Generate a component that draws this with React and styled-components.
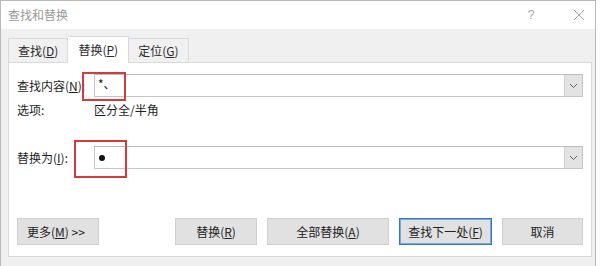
import React from "react";
import styled, { createGlobalStyle, css } from "styled-components";

const Global = createGlobalStyle`
  html, body { margin: 0; padding: 0; background: #ffffff; }
  body { font-family: "Noto Sans CJK SC", "Noto Sans", sans-serif; }
`;

const Window = styled.div`
  width: 596px;
  height: 266px;
  box-sizing: border-box;
  border: 1px solid #b9b9b9;
  border-bottom: none;
  background: #f0f0f0;
  display: flex;
  flex-direction: column;
  font-family: "Noto Sans CJK SC", "Noto Sans", sans-serif;
  font-size: 12px;
  color: #1e1e1e;
`;

const TitleBar = styled.div`
  height: 28px;
  background: #ffffff;
  display: flex;
  align-items: center;
  padding-left: 7px;
  padding-right: 10px;
  gap: 36px;
`;

const Title = styled.div`
  color: #9a9a9a;
  font-size: 12px;
  line-height: 14px;
  flex: 1;
`;

const TitleButton = styled.div`
  width: 12px;
  display: flex;
  align-items: center;
  justify-content: center;
  color: #a5a5a5;
  font-family: "Liberation Sans", sans-serif;
  font-size: 12px;
  line-height: 14px;
`;

const Body = styled.div`
  flex: 1;
  padding: 0 3px 0 7px;
  display: flex;
  flex-direction: column;
`;

const TabList = styled.div`
  display: flex;
  align-items: flex-end;
  padding-top: 7px;
  margin-bottom: -1px;
  position: relative;
  z-index: 1;
`;

const Tab = styled.div`
  box-sizing: border-box;
  padding: 0 9px;
  border: 1px solid #d9d9d9;
  border-bottom: none;
  display: flex;
  align-items: center;
  font-size: 12px;
  line-height: 14px;
  color: #2a2a2a;
  ${(p) =>
    p.$active
      ? css`
          height: 27px;
          background: #ffffff;
          padding: 0 10px;
        `
      : css`
          height: 24px;
          margin-bottom: 1px;
          background: #f0f0f0;
          & + & { border-left: none; }
        `}
`;

const Panel = styled.div`
  background: #ffffff;
  border: 1px solid #d9d9d9;
  padding: 11px 8px 11px 8px;
  display: flex;
  flex-direction: column;
`;

const FieldRow = styled.div`
  display: grid;
  grid-template-columns: 77px 1fr;
  align-items: center;
  margin-top: ${(p) => p.$mt || 0}px;
`;

const Label = styled.div`
  font-size: 12px;
  line-height: 16px;
  white-space: nowrap;
`;

const Accel = styled.span`
  text-decoration: underline;
  text-underline-offset: 1px;
`;

const ComboWrap = styled.div`
  position: relative;
`;

const Combo = styled.div`
  height: 23px;
  box-sizing: border-box;
  border: 1px solid #c6c6c6;
  border-top-color: #bdbdbd;
  background: #fff;
  display: flex;
`;

const ComboText = styled.div`
  flex: 1;
  padding-left: 3px;
  font-size: 12px;
  line-height: 18px;
  color: #111;
  display: flex;
  align-items: ${(p) => (p.$top ? "flex-start" : "center")};
`;

const Bullet = styled.span`
  display: block;
  width: 6px;
  height: 6px;
  border-radius: 50%;
  background: #111;
  margin-left: 1px;
`;

const DropButton = styled.div`
  width: 17px;
  background: #e3e3e3;
  border-left: 1px solid #d2d2d2;
  display: flex;
  align-items: center;
  justify-content: center;
`;

const Highlight = styled.div`
  position: absolute;
  border: 2px solid #d63a3a;
  box-sizing: border-box;
  left: ${(p) => p.$l}px;
  top: ${(p) => p.$t}px;
  width: ${(p) => p.$w}px;
  height: ${(p) => p.$h}px;
  pointer-events: none;
`;

const OptionValue = styled.div`
  font-size: 12px;
  line-height: 16px;
`;

const ButtonRow = styled.div`
  display: flex;
  margin-top: 49px;
`;

const ButtonGroup = styled.div`
  display: flex;
  gap: 10px;
  margin-left: auto;
`;

const Button = styled.div`
  box-sizing: border-box;
  height: 27px;
  width: ${(p) => p.$w}px;
  background: #e1e1e1;
  border: 1px solid #cfcfcf;
  display: flex;
  align-items: center;
  justify-content: ${(p) => (p.$left ? "flex-start" : "center")};
  padding-left: ${(p) => (p.$left ? 9 : 0)}px;
  font-size: 12px;
  line-height: 14px;
  color: #222;
  white-space: nowrap;
  ${(p) =>
    p.$default &&
    css`
      border: 1px solid #2f7cc0;
      box-shadow: inset 0 0 0 1px #74a9d8;
    `}
`;

const Chevron = () => (
  <svg width="9" height="6" viewBox="0 0 9 6">
    <path d="M1 1 L4.5 4.5 L8 1" fill="none" stroke="#606060" strokeWidth="1" />
  </svg>
);

const CloseIcon = () => (
  <svg width="12" height="12" viewBox="0 0 12 12">
    <path d="M1 1 L11 11 M11 1 L1 11" stroke="#a8a8a8" strokeWidth="1" />
  </svg>
);

export default function App() {
  return (
    <>
      <Global />
      <Window>
        <TitleBar>
          <Title>查找和替换</Title>
          <TitleButton>?</TitleButton>
          <TitleButton>
            <CloseIcon />
          </TitleButton>
        </TitleBar>
        <Body>
          <TabList>
            <Tab>
              查找(<Accel>D</Accel>)
            </Tab>
            <Tab $active>
              替换(<Accel>P</Accel>)
            </Tab>
            <Tab>
              定位(<Accel>G</Accel>)
            </Tab>
          </TabList>
          <Panel>
            <FieldRow>
              <Label>
                查找内容(<Accel>N</Accel>):
              </Label>
              <ComboWrap>
                <Combo>
                  <ComboText $top>*、</ComboText>
                  <DropButton>
                    <Chevron />
                  </DropButton>
                </Combo>
                <Highlight $l={-12} $t={-2} $w={44} $h={29} />
              </ComboWrap>
            </FieldRow>
            <FieldRow $mt={5}>
              <Label>选项:</Label>
              <OptionValue>区分全/半角</OptionValue>
            </FieldRow>
            <FieldRow $mt={28}>
              <Label>
                替换为(<Accel>I</Accel>):
              </Label>
              <ComboWrap>
                <Combo>
                  <ComboText>
                    <Bullet />
                  </ComboText>
                  <DropButton>
                    <Chevron />
                  </DropButton>
                </Combo>
                <Highlight $l={-20} $t={-6} $w={53} $h={38} />
              </ComboWrap>
            </FieldRow>
            <ButtonRow>
              <Button $w={82} $left>
                更多(<Accel>M</Accel>) &gt;&gt;
              </Button>
              <ButtonGroup>
                <Button $w={82}>
                  替换(<Accel>R</Accel>)
                </Button>
                <Button $w={122}>
                  全部替换(<Accel>A</Accel>)
                </Button>
                <Button $w={93} $default>
                  查找下一处(<Accel>F</Accel>)
                </Button>
                <Button $w={81}>取消</Button>
              </ButtonGroup>
            </ButtonRow>
          </Panel>
        </Body>
      </Window>
    </>
  );
}
